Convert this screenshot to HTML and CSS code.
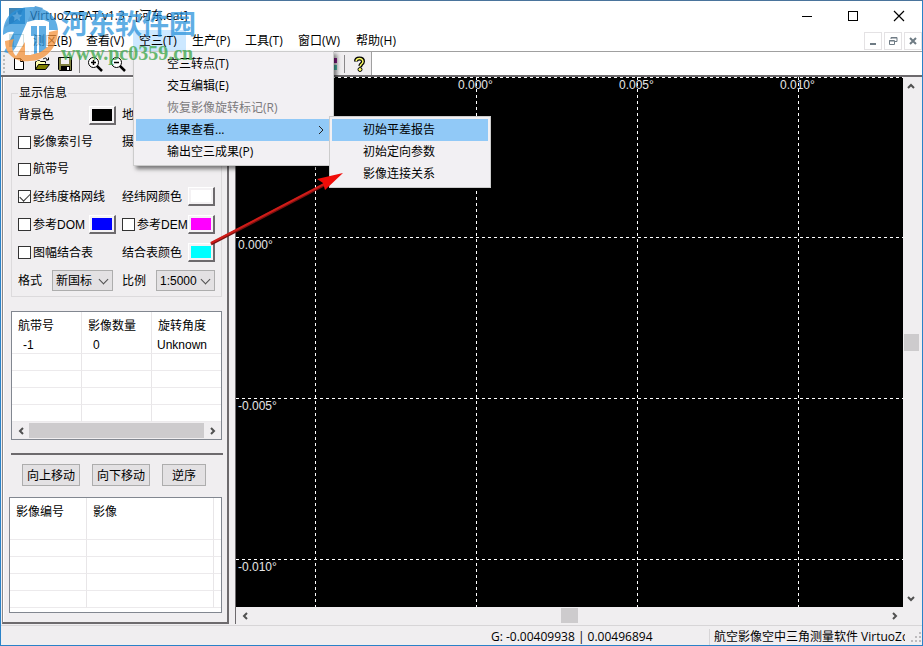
FILE: index.html
```html
<!DOCTYPE html>
<html lang="zh-CN">
<head>
    <meta charset="UTF-8">
    <meta name="viewport" content="width=device-width, initial-scale=1.0">
    <title>VirtuoZoEAT v1.3 - [河东.eat]</title>
    <link rel="stylesheet" href="styles.css">
</head>
<body>
<div class="window">
    <header class="titlebar">
        <svg class="app-icon" width="16" height="16" viewBox="0 0 16 16"><rect width="16" height="16" fill="#3f86b8"/><path d="M8 3l1.500 3.500 3.500.5-2.500 2.500.5 3.500-3-2-3 2 .5-3.500L3 7l3.500-.5z" fill="#fff"/></svg>
        <h1 class="title">VirtuoZoEAT v1.3 - [河东.eat]</h1>
        <div class="caption-buttons">
            <button type="button" aria-label="最小化"><svg width="12" height="12"><path d="M1 6.500h10" stroke="#000"/></svg></button>
            <button type="button" aria-label="最大化"><svg width="12" height="12"><rect x="1.500" y="1.500" width="9" height="9" fill="none" stroke="#000"/></svg></button>
            <button type="button" aria-label="关闭"><svg width="12" height="12"><path d="M1 1l10 10M11 1L1 11" stroke="#000" stroke-width="1.200"/></svg></button>
        </div>
    </header>

    <nav class="menubar">
        <svg class="doc-icon" width="16" height="16" viewBox="0 0 16 16"><rect x=".5" y="1.500" width="14" height="12" fill="#fff" stroke="#9bb"/><path d="M1 2h4v11H1z" fill="#8db6c4"/></svg>
        <ul class="menu">
            <li><a href="#">测区(B)</a></li>
            <li><a href="#">查看(V)</a></li>
            <li class="open"><a href="#">空三(T)</a>
                <ul class="dropdown">
                    <li><a href="#">空三转点(T)</a></li>
                    <li><a href="#">交互编辑(E)</a></li>
                    <li><a href="#" class="disabled">恢复影像旋转标记(R)</a></li>
                    <li><a href="#" class="active">结果查看...<svg width="6" height="10"><path d="M1 1l4 4-4 4" fill="none" stroke="#222"/></svg></a>
                        <ul class="submenu">
                            <li><a href="#" class="active">初始平差报告</a></li>
                            <li><a href="#">初始定向参数</a></li>
                            <li><a href="#">影像连接关系</a></li>
                        </ul>
                    </li>
                    <li><a href="#">输出空三成果(P)</a></li>
                </ul>
            </li>
            <li><a href="#">生产(P)</a></li>
            <li><a href="#">工具(T)</a></li>
            <li><a href="#">窗口(W)</a></li>
            <li><a href="#">帮助(H)</a></li>
        </ul>
        <div class="doc-buttons">
            <button type="button" aria-label="最小化文档"><svg width="10" height="10"><path d="M2 8h6" stroke="#6e7b84" stroke-width="2"/></svg></button>
            <button type="button" aria-label="还原文档"><svg width="10" height="10"><path d="M3 3V1.500h6v4H7M3 2h6M1 5h5" fill="none" stroke="#6e7b84"/><path d="M1.500 4.500h5v4h-5z" fill="none" stroke="#6e7b84"/></svg></button>
            <button type="button" aria-label="关闭文档"><svg width="10" height="10"><path d="M2 2l6 6M8 2L2 8" stroke="#6e7b84" stroke-width="2"/></svg></button>
        </div>
    </nav>

    <div class="toolbar">
        <div class="tools">
            <span class="grip"></span>
            <button type="button" class="tool" aria-label="新建"><svg width="16" height="16"><path d="M3.500 2.500h6l3 3v8h-9z" fill="#fff" stroke="#000"/><path d="M9.500 2.500v3h3" fill="none" stroke="#000"/></svg></button>
            <button type="button" class="tool" aria-label="打开"><svg width="16" height="16"><path d="M1.500 13.500v-8h1l1-1h2l1 1h5v2" fill="#ffffb0" stroke="#000"/><path d="M1.500 13.500l3-5h11l-4 5z" fill="#808000" stroke="#000"/><path d="M9 3q2-2.500 4.500.5M14.500 1.500v2.500H12" fill="none" stroke="#000"/></svg></button>
            <button type="button" class="tool" aria-label="保存"><svg width="16" height="16"><path d="M1.500 1.500h13v13h-12l-1-1z" fill="#808040" stroke="#000"/><path d="M4 2h8v6H4z" fill="#f0eef0"/><path d="M4 10h9v4.500H4z" fill="#000"/><path d="M10 11h2v3h-2z" fill="#fff"/></svg></button>
            <span class="sep"></span>
            <button type="button" class="tool" aria-label="放大"><svg width="16" height="16"><circle cx="6.500" cy="6.500" r="5" fill="#fff" stroke="#000"/><path d="M10 10l5 5" stroke="#000" stroke-width="2.500"/><path d="M4 6.500h5M6.500 4v5" stroke="#000" stroke-width="1.500"/></svg></button>
            <button type="button" class="tool" aria-label="缩小"><svg width="16" height="16"><circle cx="6.500" cy="6.500" r="5" fill="#fff" stroke="#000"/><path d="M10 10l5 5" stroke="#000" stroke-width="2.500"/><path d="M4 6.500h5" stroke="#000" stroke-width="1.500"/></svg></button>
            <button type="button" class="tool last" aria-label="图层"><svg width="16" height="16"><path d="M5 2h10v5H5z" fill="#8b1a8b"/><path d="M2 9h13v5H2z" fill="#4cc0ac"/></svg></button>
            <span class="sep"></span>
            <button type="button" class="tool" aria-label="帮助"><svg width="16" height="16"><path d="M4 5.500Q4 2.500 7.500 2.500t3.500 3q0 1.500-2 3L8 10.500" fill="none" stroke="#000" stroke-width="4"/><path d="M4 5Q4.500 2.500 7.500 2.500t3.500 3q0 1.500-2 3L8 10" fill="none" stroke="#ffff66" stroke-width="1.500"/><circle cx="8" cy="13.500" r="2" fill="#ffff66" stroke="#000"/></svg></button>
        </div>
    </div>

    <main class="workspace">
        <aside class="sidebar">
            <fieldset class="display-info">
                <legend>显示信息</legend>
                <div class="row">
                    <div class="cell"><span>背景色</span><button type="button" class="swatch black" aria-label="背景色"></button></div>
                    <div class="cell"><span>地</span></div>
                </div>
                <div class="row">
                    <div class="cell"><label><input type="checkbox">影像索引号</label></div>
                    <div class="cell"><span>摄</span></div>
                </div>
                <div class="row">
                    <div class="cell"><label><input type="checkbox">航带号</label></div>
                </div>
                <div class="row tall">
                    <div class="cell"><label><input type="checkbox" checked>经纬度格网线</label></div>
                    <div class="cell"><span>经纬网颜色</span><button type="button" class="swatch white" aria-label="经纬网颜色"></button></div>
                </div>
                <div class="row tall">
                    <div class="cell"><label><input type="checkbox">参考DOM</label><button type="button" class="swatch blue" aria-label="DOM颜色"></button></div>
                    <div class="cell"><label><input type="checkbox">参考DEM</label><button type="button" class="swatch magenta" aria-label="DEM颜色"></button></div>
                </div>
                <div class="row tall">
                    <div class="cell"><label><input type="checkbox">图幅结合表</label></div>
                    <div class="cell"><span>结合表颜色</span><button type="button" class="swatch cyan" aria-label="结合表颜色"></button></div>
                </div>
                <div class="row tall">
                    <div class="cell"><label class="short" for="format">格式</label><span class="select"><select id="format"><option>新国标</option></select></span></div>
                    <div class="cell"><label class="short" for="scale">比例</label><span class="select"><select id="scale"><option>1:5000</option></select></span></div>
                </div>
            </fieldset>

            <div class="list strips">
                <table>
                    <thead><tr><th>航带号</th><th>影像数量</th><th>旋转角度</th></tr></thead>
                    <tbody>
                        <tr><td>-1</td><td>0</td><td>Unknown</td></tr>
                        <tr><td></td><td></td><td></td></tr>
                        <tr><td></td><td></td><td></td></tr>
                        <tr><td></td><td></td><td></td></tr>
                        <tr><td></td><td></td><td></td></tr>
                    </tbody>
                </table>
                <div class="scroll-h">
                    <button type="button" aria-label="向左"><svg width="8" height="8"><path d="M6 1L3 4l3 3" fill="none" stroke="#505050" stroke-width="2"/></svg></button>
                    <span class="thumb full"></span>
                    <button type="button" aria-label="向右"><svg width="8" height="8"><path d="M2 1l3 3-3 3" fill="none" stroke="#505050" stroke-width="2"/></svg></button>
                </div>
            </div>

            <hr>

            <div class="actions">
                <button type="button">向上移动</button>
                <button type="button">向下移动</button>
                <button type="button">逆序</button>
            </div>

            <div class="list images">
                <table>
                    <thead><tr><th>影像编号</th><th>影像</th><th></th></tr></thead>
                    <tbody>
                        <tr><td></td><td></td><td></td></tr>
                        <tr><td></td><td></td><td></td></tr>
                        <tr><td></td><td></td><td></td></tr>
                        <tr><td></td><td></td><td></td></tr>
                        <tr><td></td><td></td><td></td></tr>
                    </tbody>
                </table>
            </div>
        </aside>

        <section class="view">
            <svg class="grid" width="100%" height="100%">
                <g stroke="#fff" stroke-dasharray="3 3">
                    <path d="M0 .5h3000M0 160.500h3000M0 321.500h3000M0 482.500h3000"/>
                    <path d="M79.500 0v2000M240.500 0v2000M401.500 0v2000M562.500 0v2000"/>
                </g>
                <g fill="#e6e6e6">
                    <text x="222" y="12">0.000°</text>
                    <text x="383" y="12">0.005°</text>
                    <text x="544" y="12">0.010°</text>
                    <text x="2" y="172">0.000°</text>
                    <text x="2" y="333">-0.005°</text>
                    <text x="2" y="494">-0.010°</text>
                </g>
            </svg>
            <div class="scroll-v">
                <button type="button" aria-label="向上"><svg width="8" height="8"><path d="M1 6l3-3 3 3" fill="none" stroke="#505050" stroke-width="2"/></svg></button>
                <span class="thumb"></span>
                <button type="button" aria-label="向下"><svg width="8" height="8"><path d="M1 2l3 3 3-3" fill="none" stroke="#505050" stroke-width="2"/></svg></button>
            </div>
            <div class="scroll-h">
                <button type="button" aria-label="向左"><svg width="8" height="8"><path d="M6 1L3 4l3 3" fill="none" stroke="#505050" stroke-width="2"/></svg></button>
                <span class="thumb"></span>
                <button type="button" aria-label="向右"><svg width="8" height="8"><path d="M2 1l3 3-3 3" fill="none" stroke="#505050" stroke-width="2"/></svg></button>
            </div>
        </section>
    </main>

    <footer class="statusbar">
        <span class="coords">G: -0.00409938 | 0.00496894</span>
        <span class="product">航空影像空中三角测量软件 VirtuoZo</span>
        <svg class="size-grip" width="10" height="10" fill="#bdbbbe"><path d="M8 0h2v2H8zM4 4h2v2H4zM8 4h2v2H8zM0 8h2v2H0zM4 8h2v2H4zM8 8h2v2H8z"/></svg>
    </footer>

    <!-- site watermark over the top left corner -->
    <div class="watermark">
        <svg width="60" height="66" viewBox="0 0 60 66">
            <circle cx="29" cy="35" r="26" fill="#fff" fill-opacity=".75"/>
            <path d="M2 34C2 17 11 6 30 6c15 0 26 9 27 23h-9V21l-5-2H27L15 46l-5 7-7-2 10-20c-4-1-7 0-11 3z" fill="#2b93dc"/>
            <path d="M34 5l8 2-8 12-8 2zM3 27C8 16 14 10 22 8l-4 10z" fill="#1f83cd"/>
            <path d="M4 40l9-2c-3 7-2 13 2 17l9-14v13c12 1 23-7 24-23l9-2c0 18-13 31-28 31C14 62 4 53 4 40z" fill="#f5923a"/>
            <path d="M29 25h17v21c-4 4-8 6-13 7V35h-4z" fill="#2b93dc"/>
            <path d="M29 25v29M37 25v27M46 22v24" stroke="#fff" stroke-width="2" fill="none"/>
        </svg>
        <div class="mark-text">
            <span class="mark-name">河东软件园</span>
            <span class="mark-url">www.pc0359.cn</span>
        </div>
    </div>

    <!-- red pointer towards the submenu -->
    <svg class="pointer" width="142" height="80" viewBox="0 0 142 80">
        <path d="M4 74L119 14" stroke="#7a1010" stroke-width="3"/>
        <path d="M4 73L119 13" stroke="#cf1c18" stroke-width="2"/>
        <path d="M136 3L110 9l6 4 2 7z" fill="#f00c08"/>
    </svg>
</div>
</body>
</html>
```
FILE: styles.css
```css
* {
    box-sizing: border-box;
}
body {
    margin: 0;
    font-family: "Liberation Sans", "Noto Sans CJK SC", sans-serif;
    font-size: 12px;
    line-height: 16px;
    color: #000;
}
button, select, input {
    font: inherit;
    color: inherit;
    margin: 0;
    padding: 0;
}
ul {
    list-style: none;
    margin: 0;
    padding: 0;
}
a {
    color: inherit;
    text-decoration: none;
}
.window {
    position: relative;
    display: flex;
    flex-direction: column;
    height: 100vh;
    overflow: hidden;
    border: 1px solid #2a82c8;
    border-top-color: #4a749c;
    background-color: #f0eef0;
}

/* title bar and menu */
.titlebar {
    display: flex;
    align-items: center;
    height: 29px;
    padding-left: 8px;
    background-color: #fff;
}
.title {
    flex: 1;
    margin: 0 0 0 5px;
    font-family: "Open Sans", "Noto Sans CJK SC", sans-serif;
    font-size: 12px;
    font-weight: normal;
}
.caption-buttons {
    display: flex;
}
.caption-buttons button {
    display: flex;
    align-items: center;
    justify-content: center;
    width: 46px;
    height: 29px;
    border: none;
    background: none;
}
.menubar {
    display: flex;
    align-items: center;
    height: 22px;
    padding-left: 8px;
    background-color: #fff;
    border-bottom: 1px solid #a0a0a0;
    font-family: "Open Sans", "Noto Sans CJK SC", sans-serif;
}
.menu {
    display: flex;
    flex: 1;
    margin-left: 2px;
}
.menu > li {
    position: relative;
    width: 53px;
}
.menu > li:nth-child(6) {
    width: 58px;
}
.menu > li > a {
    display: block;
    padding-left: 6px;
    line-height: 21px;
    white-space: nowrap;
}
.menu > .open > a {
    background-color: #cce8ff;
}
.dropdown, .submenu {
    position: absolute;
    z-index: 2;
    background-color: #f2f0f3;
    border: 1px solid #ccc;
    box-shadow: 3px 3px 4px rgba(0, 0, 0, 0.5);
}
.dropdown {
    top: 100%;
    left: 0;
    width: 201px;
    padding: 1px 4px 2px 2px;
}
.submenu {
    top: -3px;
    left: 193px;
    width: 162px;
    padding: 2px;
    box-shadow: none;
}
.dropdown li {
    position: relative;
}
.dropdown a {
    display: flex;
    align-items: center;
    justify-content: space-between;
    height: 22px;
    padding: 0 5px 0 31px;
}
.dropdown .active {
    background-color: #91c9f7;
}
.dropdown .disabled {
    color: #7c7a7c;
}
.doc-buttons {
    display: flex;
    gap: 2px;
}
.doc-buttons button {
    display: flex;
    align-items: center;
    justify-content: center;
    width: 18px;
    height: 18px;
    border: 1px solid #e4e2e4;
    background-color: #fff;
}

/* toolbar */
.toolbar {
    display: flex;
    height: 25px;
    background-color: #fff;
    border-bottom: 2px solid #6d6a6d;
}
.tools {
    display: flex;
    align-items: center;
    width: 371px;
    padding-left: 2px;
    background-color: #f0eef0;
    border-right: 1px solid #a0a0a0;
}
.grip {
    width: 2px;
    height: 18px;
    margin-right: 2px;
    border-left: 2px dotted #bbb;
}
.tool {
    display: flex;
    align-items: center;
    justify-content: center;
    width: 23px;
    height: 22px;
    border: none;
    background: none;
}
.tool.last {
    margin-left: auto;
}
.sep {
    width: 1px;
    height: 18px;
    margin: 0 3px;
    background-color: #8a888a;
}

/* work area */
.workspace {
    display: flex;
    flex: 1;
    gap: 6px;
    min-height: 0;
    padding: 0 3px 1px 1px;
}
.sidebar {
    flex: none;
    width: 227px;
    padding: 8px 4px 0 8px;
    border: 1px solid #8a888a;
    border-width: 0 2px 2px 1px;
    border-color: #8a888a #6d6a6d #6d6a6d #8a888a;
    box-shadow: inset 1px 1px #fff;
}
.display-info {
    display: flex;
    flex-direction: column;
    gap: 5px;
    width: 211px;
    margin: 0;
    padding: 3px 6px 4px 6px;
    border: 1px solid #dcdadc;
}
.display-info legend {
    padding: 0 1px;
}
.row {
    display: grid;
    grid-template-columns: 104px 1fr;
    height: 22px;
}
.row.tall {
    height: 23px;
}
.cell {
    display: flex;
    align-items: center;
    justify-content: space-between;
    white-space: nowrap;
}
.cell:first-child {
    padding-right: 6px;
}
.cell label {
    display: flex;
    align-items: center;
    gap: 2px;
}
.cell .short {
    width: 34px;
}
input[type="checkbox"] {
    appearance: none;
    width: 13px;
    height: 13px;
    border: 1px solid #333;
    background-color: #fff;
}
input[type="checkbox"]:checked::after {
    content: "";
    display: block;
    width: 9px;
    height: 5px;
    margin: 2px 0 0 1px;
    border: solid #333;
    border-width: 0 0 1px 1px;
    transform: rotate(-45deg);
}
.swatch {
    width: 27px;
    height: 19px;
    border: 1px solid #fff;
    border-right: 2px solid #6d6a6d;
    border-bottom: 2px solid #6d6a6d;
    box-shadow: inset 0 0 0 2px #f4f2f4;
}
.black { background-color: #000; }
.white { background-color: #fff; }
.blue { background-color: #00f; }
.magenta { background-color: #f0f; }
.cyan { background-color: #0ff; }
.select {
    position: relative;
    flex: 1;
}
.cell:first-child .select {
    margin-right: 3px;
}
.select select {
    display: block;
    width: 100%;
    height: 21px;
    padding-left: 3px;
    appearance: none;
    border: 1px solid #adadad;
    border-radius: 0;
    background-color: #e3e1e3;
}
.select::after {
    content: "";
    position: absolute;
    top: 6px;
    right: 6px;
    width: 6px;
    height: 6px;
    border: solid #505050;
    border-width: 0 1px 1px 0;
    transform: rotate(45deg);
    pointer-events: none;
}

/* lists */
.list {
    background-color: #fff;
    border: 1px solid #828790;
}
.strips {
    width: 211px;
    margin-top: 14px;
}
.images {
    width: 213px;
    height: 116px;
    margin: 11px 0 0 -2px;
}
.list table {
    width: 100%;
    table-layout: fixed;
    border-collapse: separate;
    border-spacing: 0;
}
.list th, .list td {
    height: 17px;
    padding: 0 0 0 5px;
    border-right: 1px solid #e8e6e8;
    border-bottom: 1px solid #eceaec;
    font-weight: normal;
    line-height: 16px;
    text-align: left;
    white-space: nowrap;
}
.list th {
    height: 25px;
    padding: 2px 0 0 6px;
    border-bottom: none;
}
.list th:last-child, .list td:last-child {
    border-right: none;
}
.strips th:nth-child(-n+2) {
    width: 70px;
}
.strips td:nth-child(-n+2) {
    padding-left: 11px;
}
.images th:first-child {
    width: 77px;
}
.images th:last-child {
    width: 7px;
    padding: 0;
}
.images td:last-child {
    padding: 0;
}
hr {
    width: 212px;
    height: 2px;
    margin: 13px 0 9px;
    border: none;
    background-color: #6d6a6d;
}
.actions {
    display: flex;
    gap: 12px;
    padding-left: 11px;
}
.actions button {
    height: 22px;
    padding: 1px 4px 0;
    border: 1px solid #adadad;
    background-color: #e3e1e3;
}
.actions button:last-child {
    padding: 1px 9px 0;
}

/* map view */
.view {
    display: grid;
    flex: 1;
    grid-template-columns: 1fr 16px;
    grid-template-rows: 1fr 17px;
    min-width: 0;
    border-left: 1px solid #6d6a6d;
}
.grid {
    display: block;
    min-height: 0;
    background-color: #000;
}
.scroll-h, .scroll-v {
    display: flex;
    align-items: center;
    justify-content: space-between;
    background-color: #f0eef0;
}
.scroll-h {
    height: 17px;
}
.scroll-v {
    flex-direction: column;
}
.scroll-h button, .scroll-v button {
    display: flex;
    align-items: center;
    justify-content: center;
    width: 17px;
    height: 17px;
    border: none;
    background: none;
}
.thumb {
    width: 17px;
    height: 15px;
    background-color: #cdcbcd;
}
.scroll-v .thumb {
    width: 15px;
    height: 17px;
}
.thumb.full {
    flex: 1;
}

/* status bar */
.statusbar {
    display: flex;
    align-items: center;
    height: 20px;
    padding: 2px 1px 0 0;
    border-top: 1px solid #d7d5d7;
    font-family: "Open Sans", "Noto Sans CJK SC", sans-serif;
    white-space: nowrap;
}
.coords {
    width: 218px;
    margin-left: auto;
}
.product {
    width: 196px;
    padding-left: 4px;
    border-left: 1px solid #d7d5d7;
    overflow: hidden;
}
.size-grip {
    margin-left: 6px;
}

/* overlays */
.watermark {
    position: absolute;
    top: 0;
    left: 0;
    z-index: 3;
    display: flex;
    opacity: 0.75;
    pointer-events: none;
}
.mark-text {
    display: flex;
    flex-direction: column;
    padding-top: 6px;
}
.mark-name {
    color: #2b93dc;
    font-size: 27px;
    font-weight: bold;
    line-height: 36px;
}
.mark-url {
    color: #3aa648;
    font-family: "Liberation Serif", serif;
    font-size: 20px;
    font-weight: bold;
    line-height: 20px;
}
.pointer {
    position: absolute;
    top: 169px;
    left: 206px;
    z-index: 3;
    pointer-events: none;
}
```
